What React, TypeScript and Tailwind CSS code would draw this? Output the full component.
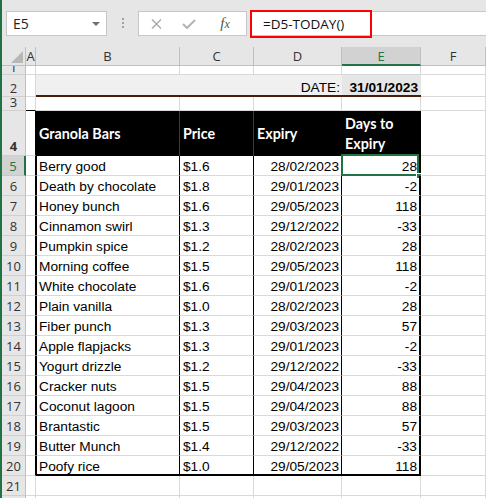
import React from 'react'

const items = [
  ['Berry good', '$1.6', '28/02/2023', '28'],
  ['Death by chocolate', '$1.8', '29/01/2023', '-2'],
  ['Honey bunch', '$1.6', '29/05/2023', '118'],
  ['Cinnamon swirl', '$1.3', '29/12/2022', '-33'],
  ['Pumpkin spice', '$1.2', '28/02/2023', '28'],
  ['Morning coffee', '$1.5', '29/05/2023', '118'],
  ['White chocolate', '$1.6', '29/01/2023', '-2'],
  ['Plain vanilla', '$1.0', '28/02/2023', '28'],
  ['Fiber punch', '$1.3', '29/03/2023', '57'],
  ['Apple flapjacks', '$1.3', '29/01/2023', '-2'],
  ['Yogurt drizzle', '$1.2', '29/12/2022', '-33'],
  ['Cracker nuts', '$1.5', '29/04/2023', '88'],
  ['Coconut lagoon', '$1.5', '29/04/2023', '88'],
  ['Brantastic', '$1.5', '29/03/2023', '57'],
  ['Butter Munch', '$1.4', '29/12/2022', '-33'],
  ['Poofy rice', '$1.0', '29/05/2023', '118'],
]

const grid = 'border-r border-b border-r-[#d9d9d9] border-b-[#d9d9d9]'

// row number cell; pad shifts the 20px label line inside rows of odd height
function RowHead({ n, active, pad = '' }: { n: number; active?: boolean; pad?: string }) {
  return (
    <div
      className={
        active
          ? "w-[24px] shrink-0 h-full overflow-hidden flex justify-center bg-[#d2d2d2] text-[#217346] border-r-2 border-b border-r-[#217346] border-b-[#c8c8c8] font-['Open_Sans'] text-[13px] leading-[20px]"
          : "w-[24px] shrink-0 h-full overflow-hidden flex justify-center bg-[#e6e6e6] text-[#333] border-r border-b border-r-[#bfbfbf] border-b-[#d0d0d0] font-['Open_Sans'] text-[13px] leading-[20px]"
      }
    >
      <span className={`block shrink-0 h-[20px] ${pad}`}>{n}</span>
    </div>
  )
}

function Blank({ w }: { w: string }) {
  return <div className={`${w} shrink-0 h-full ${grid}`} />
}

export default function App() {
  return (
    <div className="w-[486px] h-[498px] overflow-hidden bg-[#e6e6e6] border-l-2 border-l-[#217346] font-['Liberation_Sans'] text-black">
      {/* formula bar */}
      <div className="h-[47px] flex items-start pt-[11px] pl-[4px]">
        <div className="w-[101px] h-[25px] bg-white border border-[#c6c6c6] flex items-center justify-between pl-[6px] pr-[6px]">
          <span className="text-[14px] text-[#222] font-['Open_Sans']">E5</span>
          <svg width="8" height="4" viewBox="0 0 8 4">
            <path d="M0 0H8L4 4Z" fill="#707070" />
          </svg>
        </div>
        <div className="w-[31px] flex flex-col items-center gap-[2px] pt-[7px]">
          <div className="w-[2px] h-[2px] bg-[#a0a0a0]" />
          <div className="w-[2px] h-[2px] bg-[#a0a0a0]" />
          <div className="w-[2px] h-[2px] bg-[#a0a0a0]" />
        </div>
        <div className="w-[109px] h-[25px] bg-white border border-[#c6c6c6] flex items-center">
          <div className="w-[36px] flex justify-center">
            <svg width="11" height="10" viewBox="0 0 11 10">
              <path d="M1 0.5L10 9.5M10 0.5L1 9.5" stroke="#a8a8a8" strokeWidth="1.4" />
            </svg>
          </div>
          <div className="w-[32px] flex justify-center">
            <svg width="14" height="10" viewBox="0 0 14 10">
              <path d="M1 5L5 9L13 1" stroke="#b4b4b4" strokeWidth="2" fill="none" />
            </svg>
          </div>
          <div className="w-[44px] flex justify-center">
            <span className="font-['Liberation_Serif'] italic text-[15px] text-[#555] leading-none">
              f<span className="text-[12px]">x</span>
            </span>
          </div>
        </div>
        <div className="ml-[3px] flex-1 h-[25px] bg-white border-y border-l border-[#c6c6c6] flex">
          <div className="w-[122px] h-[28px] -mt-[2px] -ml-[1px] shrink-0 border-2 border-[#ff0000] flex items-center pl-[11px] font-['Open_Sans'] text-[13.5px] text-[#111]">
            =D5-TODAY()
          </div>
        </div>
      </div>

      {/* sheet */}
      <div className="bg-white">
        {/* column headers */}
        <div className="flex h-[19px] bg-[#e6e6e6] font-['Open_Sans'] text-[13px] text-[#333] leading-[18px]">
          <div className="w-[24px] shrink-0 h-full border-r border-b border-r-[#bfbfbf] border-b-[#bfbfbf] flex items-end justify-end pr-[2px] pb-[2px]">
            <svg width="12" height="12" viewBox="0 0 12 12">
              <path d="M12 0V12H0Z" fill="#b7b7b7" />
            </svg>
          </div>
          <div className="w-[10px] shrink-0 h-full border-r border-b border-r-[#bfbfbf] border-b-[#bfbfbf] flex justify-center">A</div>
          <div className="w-[144px] shrink-0 h-full border-r border-b border-r-[#bfbfbf] border-b-[#bfbfbf] text-center">B</div>
          <div className="w-[74px] shrink-0 h-full border-r border-b border-r-[#bfbfbf] border-b-[#bfbfbf] text-center">C</div>
          <div className="w-[88px] shrink-0 h-full border-r border-b border-r-[#bfbfbf] border-b-[#bfbfbf] text-center">D</div>
          <div className="w-[79px] shrink-0 h-full border-r border-b-2 border-r-[#bfbfbf] border-b-[#217346] bg-[#d2d2d2] text-[#217346] text-center">E</div>
          <div className="w-[65px] shrink-0 h-full border-r border-b border-r-[#bfbfbf] border-b-[#bfbfbf] text-center">F</div>
        </div>

        {/* row 1 */}
        <div className="flex h-[9px]">
          <RowHead n={1} pad="-mt-[9px]" />
          <Blank w="w-[10px]" />
          <Blank w="w-[144px]" />
          <Blank w="w-[74px]" />
          <Blank w="w-[88px]" />
          <Blank w="w-[79px]" />
          <Blank w="w-[65px]" />
        </div>

        {/* row 2 */}
        <div className="flex h-[22px] text-[13.7px] leading-[20px]">
          <RowHead n={2} pad="mt-[3px]" />
          <Blank w="w-[10px]" />
          <div className="w-[144px] shrink-0 h-full bg-[#f0f0f0] border-b-2 border-b-[#4a1d06]" />
          <div className="w-[74px] shrink-0 h-full bg-[#f0f0f0] border-b-2 border-b-[#4a1d06]" />
          <div className="w-[88px] shrink-0 h-full bg-[#f0f0f0] border-b-2 border-b-[#4a1d06] text-right pr-[2px] pt-[3px]">DATE:</div>
          <div className="w-[79px] shrink-0 h-full bg-[#e7e6e6] border-b-2 border-b-[#4a1d06] text-right pr-[3px] pt-[3px] font-bold">31/01/2023</div>
          <Blank w="w-[65px]" />
        </div>

        {/* row 3 */}
        <div className="flex h-[14px]">
          <RowHead n={3} pad="-mt-[5px]" />
          <div className="w-[10px] shrink-0 h-full border-r border-b border-r-[#d9d9d9] border-b-black" />
          <Blank w="w-[144px]" />
          <Blank w="w-[74px]" />
          <Blank w="w-[88px]" />
          <Blank w="w-[79px]" />
          <Blank w="w-[65px]" />
        </div>

        {/* row 4 header */}
        <div className="flex h-[45px] font-['Lato'] text-[14.3px] leading-[20px] font-bold text-white">
          <RowHead n={4} pad="mt-[25px]" />
          <div className="w-[10px] shrink-0 h-full border-r border-b border-r-black border-b-[#d9d9d9]" />
          <div className="w-[144px] shrink-0 h-full bg-black border-r border-r-[#3c3c3c] flex items-center pl-[3px]">Granola Bars</div>
          <div className="w-[74px] shrink-0 h-full bg-black border-r border-r-[#3c3c3c] flex items-center pl-[3px]">Price</div>
          <div className="w-[88px] shrink-0 h-full bg-black flex items-center pl-[3px]">Expiry</div>
          <div className="w-[79px] shrink-0 h-full bg-black border-r-2 border-r-black flex flex-col justify-center pl-[3px]">
            <span>Days to</span>
            <span>Expiry</span>
          </div>
          <Blank w="w-[65px]" />
        </div>

        {/* data rows */}
        {items.map((r, i) => {
          const n = i + 5
          const last = i === items.length - 1
          return (
            <div key={n} className="flex h-[20px] text-[13.7px] leading-[20px]">
              <RowHead n={n} active={n === 5} />
              <div className="w-[10px] shrink-0 h-full border-r border-b border-r-black border-b-[#d9d9d9]" />
              <div
                className={
                  last
                    ? 'w-[144px] shrink-0 h-full border-l border-r border-b-2 border-l-black border-r-black border-b-black pl-[2px] pt-[1px] whitespace-nowrap'
                    : 'w-[144px] shrink-0 h-full border-l border-r border-b border-l-black border-r-black border-b-[#d9d9d9] pl-[2px] pt-[1px] whitespace-nowrap'
                }
              >
                {r[0]}
              </div>
              <div
                className={
                  last
                    ? 'w-[74px] shrink-0 h-full border-r border-b-2 border-r-black border-b-black pl-[3px] pt-[1px]'
                    : 'w-[74px] shrink-0 h-full border-r border-b border-r-black border-b-[#d9d9d9] pl-[3px] pt-[1px]'
                }
              >
                {r[1]}
              </div>
              <div
                className={
                  last
                    ? 'w-[88px] shrink-0 h-full border-r border-b-2 border-r-black border-b-black text-right pr-[2px] pt-[1px]'
                    : 'w-[88px] shrink-0 h-full border-r border-b border-r-black border-b-[#d9d9d9] text-right pr-[2px] pt-[1px]'
                }
              >
                {r[2]}
              </div>
              <div
                className={
                  last
                    ? 'relative w-[79px] shrink-0 h-full border-r-2 border-b-2 border-r-black border-b-black text-right pr-[2px] pt-[1px]'
                    : 'relative w-[79px] shrink-0 h-full border-r-2 border-b border-r-black border-b-[#d9d9d9] text-right pr-[2px] pt-[1px]'
                }
              >
                {r[3]}
                {n === 5 && (
                  <>
                    <div className="absolute -left-[1px] -top-[2px] right-0 -bottom-[1px] border-2 border-[#217346]" />
                    <div className="absolute -right-[3px] -bottom-[4px] w-[6px] h-[6px] bg-[#217346] border border-white" />
                  </>
                )}
              </div>
              <Blank w="w-[65px]" />
            </div>
          )
        })}

        {/* rows 21, 22 */}
        {[21, 22].map((n) => (
          <div key={n} className="flex h-[20px]">
            <RowHead n={n} />
            <Blank w="w-[10px]" />
            <Blank w="w-[144px]" />
            <Blank w="w-[74px]" />
            <Blank w="w-[88px]" />
            <Blank w="w-[79px]" />
            <Blank w="w-[65px]" />
          </div>
        ))}
      </div>
    </div>
  )
}
